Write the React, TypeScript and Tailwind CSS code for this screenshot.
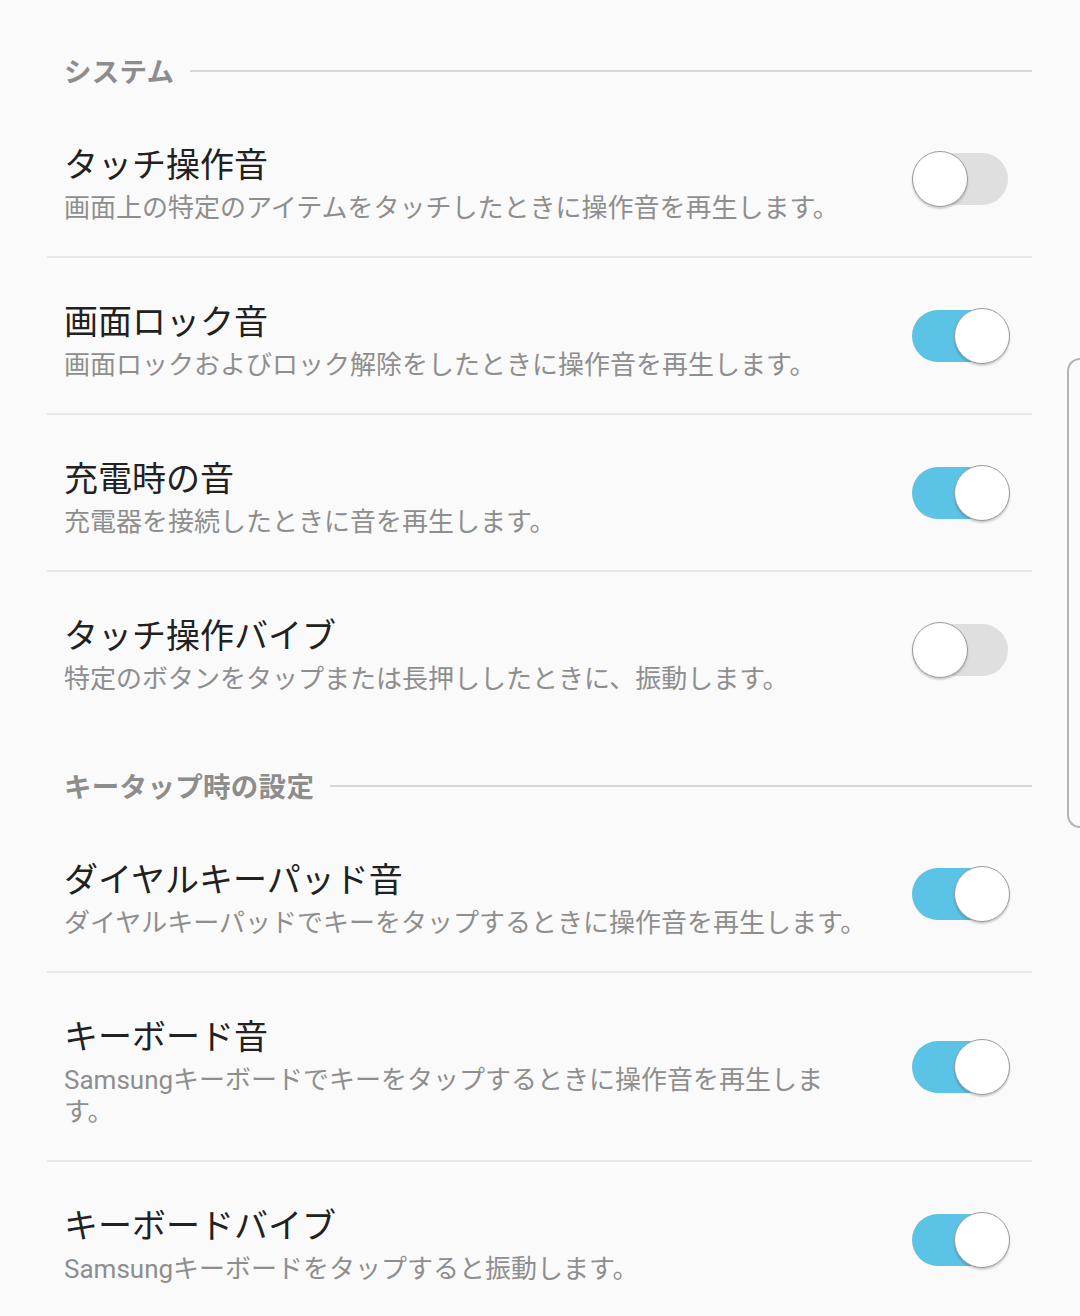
import React from "react";

type Item = { title: string; sub: string; on: boolean };

const system: Item[] = [
  { title: "タッチ操作音", sub: "画面上の特定のアイテムをタッチしたときに操作音を再生します。", on: false },
  { title: "画面ロック音", sub: "画面ロックおよびロック解除をしたときに操作音を再生します。", on: true },
  { title: "充電時の音", sub: "充電器を接続したときに音を再生します。", on: true },
  { title: "タッチ操作バイブ", sub: "特定のボタンをタップまたは長押ししたときに、振動します。", on: false },
];

const keytap: Item[] = [
  { title: "ダイヤルキーパッド音", sub: "ダイヤルキーパッドでキーをタップするときに操作音を再生します。", on: true },
  { title: "キーボード音", sub: "Samsungキーボードでキーをタップするときに操作音を再生します。", on: true },
  { title: "キーボードバイブ", sub: "Samsungキーボードをタップすると振動します。", on: true },
];

function Toggle({ on }: { on: boolean }) {
  return (
    <div className="relative w-[98px] h-[56px] shrink-0 flex items-center">
      <div
        className={
          on
            ? "w-[96px] h-[52px] rounded-full bg-[#5bc3e6]"
            : "w-[96px] h-[52px] rounded-full bg-[#dfdfdf]"
        }
      />
      <div
        className={
          on
            ? "absolute right-0 top-0 w-[56px] h-[56px] rounded-full bg-white border border-[#9a9a9a] shadow-[0_2px_2px_rgba(0,0,0,0.18)]"
            : "absolute left-0 top-0 w-[56px] h-[56px] rounded-full bg-white border border-[#9a9a9a] shadow-[0_2px_2px_rgba(0,0,0,0.18)]"
        }
      />
    </div>
  );
}

function Header({ label }: { label: string }) {
  return (
    <div className="flex items-center pl-[17px] pt-[43px] pb-[10px]">
      <span className="text-[27.5px] leading-[36px] font-bold text-[#8d8d8d] tracking-[0.3px]">{label}</span>
      <div className="relative -top-[2px] flex-1 h-[2px] bg-[#d8d8d8] ml-[16px]" />
    </div>
  );
}

function Row({ item, last }: { item: Item; last: boolean }) {
  return (
    <div className={last ? "flex items-center pl-[17px] pr-[22px]" : "flex items-center pl-[17px] pr-[22px] border-b-2 border-[#e8e8e8]"}>
      <div className="flex-1 pt-[42px] pb-[32px] pr-[40px]">
        <div className="text-[34px] leading-[44px] text-[#212121]">{item.title}</div>
        <div className="mt-[5px] text-[26px] leading-[32px] text-[#8e8e8e]">{item.sub}</div>
      </div>
      <Toggle on={item.on} />
    </div>
  );
}

export default function App() {
  return (
    <div
      className="relative w-[1080px] h-[1316px] overflow-hidden bg-[#fafafa] pt-[12px] pl-[47px] pr-[48px]"
      style={{ fontFamily: "Roboto, 'Noto Sans CJK JP', sans-serif" }}
    >
      <Header label="システム" />
      {system.map((it, i) => (
        <Row key={it.title} item={it} last={i === system.length - 1} />
      ))}
      <Header label="キータップ時の設定" />
      {keytap.map((it, i) => (
        <Row key={it.title} item={it} last={i === keytap.length - 1} />
      ))}
      <div className="absolute right-0 top-[358px] w-[13px] h-[470px] rounded-l-[14px] border-2 border-r-0 border-[#b4b4b4]" />
    </div>
  );
}
